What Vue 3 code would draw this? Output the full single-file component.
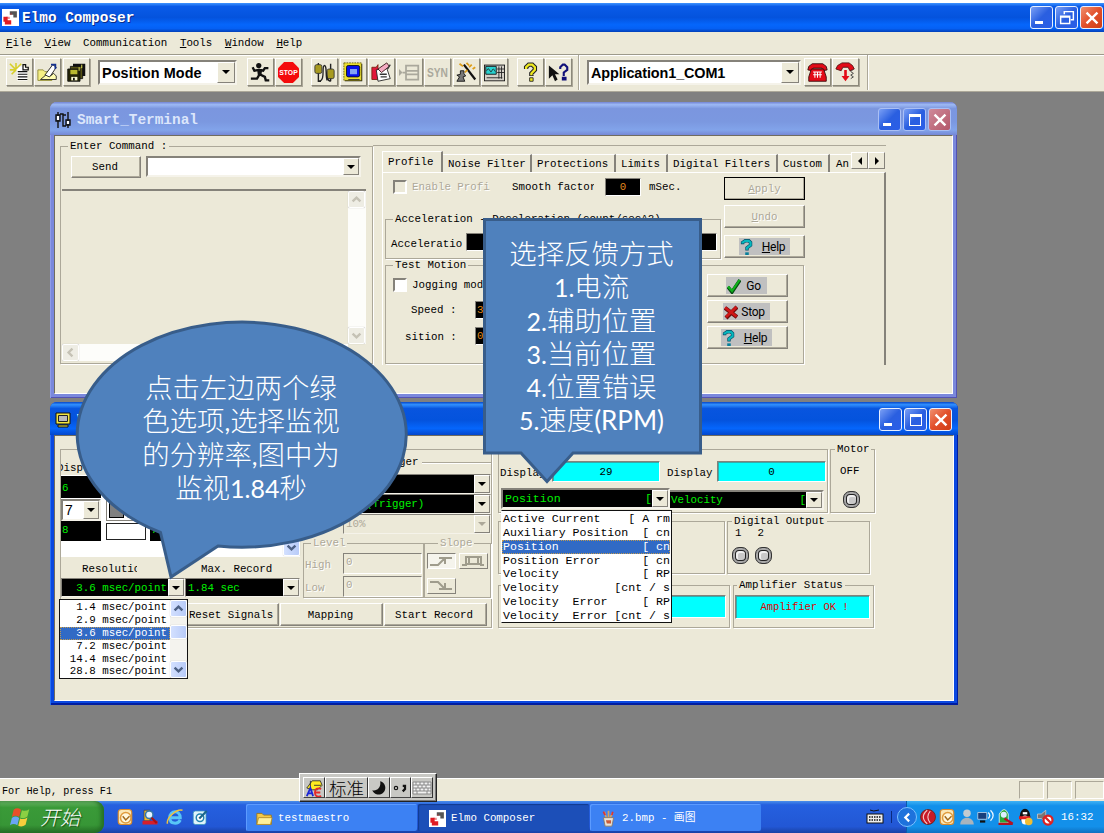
<script setup>
const menus = ['File', 'View', 'Communication', 'Tools', 'Window', 'Help']
const plainMenus = ['Communication']

const icons = {
  elmo: '<rect width="24" height="24" fill="#fff"/><path d="M11 3h10v9h-5V8h-5z" fill="#555"/><path d="M2 11h6v5h5v6H4v-4H2z" fill="#e01b24"/><path d="M6 11h5v3H8zM13 5l-2 3h3z" fill="#e01b24" opacity=".5"/>',
  newdoc: '<path d="M9 5h8l4 4v12H9z" fill="#fff"/><path d="M16 3h3v3h3v3h-6zM10 11h11M10 14h11M10 17h11M10 20h11" fill="none" stroke="#111" stroke-width="1.4"/><path d="M1 2l7 7M8 1v7M1 9h7M14 2L8 8M3 14l5-5" stroke="#d7cf2c" stroke-width="1.8"/>',
  open: '<path d="M1 9h6l2 2h8v10H1z" fill="#f5ef84" stroke="#8b8730"/><path d="M9 15L18 3l4 3-8 12z" fill="#fff" stroke="#111"/><path d="M4 20h18v-4l-3-3-5 4-4-2z" fill="#fffdb0" stroke="#222"/><path d="M16 3h5v5" fill="none" stroke="#15328f" stroke-width="2"/>',
  save: '<path d="M8 2h14v14H8z" fill="#111"/><path d="M5 5h14v14H5z" fill="#555214" stroke="#111"/><path d="M2 8h14v14H2z" fill="#242406" stroke="#111"/><path d="M5 9h8v5H5z" fill="#b9b92f"/><path d="M6 17h7v4H6z" fill="#f8f8d0"/><path d="M8 18h2v3H8z" fill="#111"/><path d="M18 3v4M15 6v4" stroke="#ffff66"/>',
  run: '<circle cx="10" cy="4" r="3" fill="#111"/><path d="M3 6l2 4 5-1 5 1 2-3h4M10 8l1 6 6 3 1 4h4M11 14l-3 5H1" fill="none" stroke="#111" stroke-width="2.7"/><path d="M8 8h6l-1 7H9z" fill="#111"/>',
  stop: '<path d="M7 0h10l7 7v10l-7 7H7l-7-7V7z" fill="#f40b0b"/><text x="12" y="15.3" text-anchor="middle" font-family="Liberation Sans" font-size="9" font-weight="700" fill="#fff" textLength="21" lengthAdjust="spacingAndGlyphs">STOP</text>',
  plugs: '<path d="M5 12v10h3M5 1v3M19 2v7M19 18v4" fill="none" stroke="#222" stroke-width="1.6"/><rect x="1" y="3" width="8" height="10" rx="2" fill="#a79a20" stroke="#333"/><rect x="15" y="8" width="8" height="11" rx="2" fill="#a79a20" stroke="#333"/><path d="M5 22c9 0 3-18 7-18s-1 17 7 18M12 4c3 0 1 14 3 17" fill="none" stroke="#222" stroke-width="1.5"/>',
  monitor: '<path d="M2 2h20v20H2z" fill="#111"/><path d="M1 1h20v20H1z" fill="#ebdf32" stroke="#665f10" stroke-dasharray="2 1"/><rect x="4" y="4" width="15" height="13" rx="2" fill="#0711ec" stroke="#111"/><rect x="8" y="8" width="8" height="6" fill="#83a3f4"/><path d="M6 20h13" stroke="#333"/>',
  notes: '<path d="M1 6h5l2-3v17H1z" fill="#e1173a" stroke="#721"/><path d="M6 9l12-2 4 12-14 3z" fill="#fff" stroke="#222"/><path d="M8 8L18 1l3 4-9 7z" fill="#f3abc2" stroke="#311"/><path d="M10 14h8M11 17h7M19 8l3-5" stroke="#333" stroke-width="1.5"/>',
  rows: '<path d="M0 8l4 4-4 4z" fill="#aaa89c"/><path d="M4 12h4M8 4h14v16H8zM8 10h14M8 14h14" fill="none" stroke="#aaa89c" stroke-width="2"/>',
  syn: '<text x="12" y="17" text-anchor="middle" font-family="Liberation Sans" font-size="14" font-weight="700" fill="#aaa89c" textLength="24" lengthAdjust="spacingAndGlyphs">SYN</text>',
  wand: '<path d="M9 3l13 17" stroke="#111" stroke-width="2.5"/><path d="M12 1l3 3M18 3l-3 3M8 5L4 2M19 8l3-2M13 9l-3 3" stroke="#dd9d18" stroke-width="2"/><path d="M5 10h4v3l2 3-3 1 2 5H1l3-5-3-2 4-1z" fill="#777" stroke="#111"/>',
  scope: '<rect x="0.500" y="3.500" width="23" height="18" fill="#d4d0c8" stroke="#111"/><path d="M2 5h12v9H2z" fill="#29d2d0" stroke="#111"/><path d="M3 10c3-7 4 5 6 0s3 1 4 1M17 5v14M20 5v14M15 8h8M15 12h8M3 18h18" fill="none" stroke="#222"/>',
  help: '<path d="M7 8V6l3-3h4l3 3v3l-4 4v3" fill="none" stroke="#222" stroke-width="5"/><path d="M7 8V6l3-3h4l3 3v3l-4 4v2" fill="none" stroke="#efea20" stroke-width="2.6"/><path d="M11 18h4v4h-4z" fill="#efea20" stroke="#222"/>',
  pointhelp: '<path d="M1 4v15l4-4 3 7 3-2-3-6h5z" fill="#111"/><path d="M14 8V6l3-3h2l3 3v3l-4 3v4M17 18h3v2h-3z" fill="none" stroke="#101078" stroke-width="2.4"/>',
  phone: '<path d="M1 9l1-4 4-3h12l4 3 1 4-5 1-1-3H7l-1 3z" fill="#e30b17" stroke="#35090a"/><path d="M5 8h14l3 9v5H2v-5z" fill="#e30b17" stroke="#35090a"/><path d="M9 11v7M12 11v7M15 11v7M7 11.500h10M7 14.500h10" stroke="#fff" stroke-width="1.200"/>',
  hang: '<path d="M1 8l2-4 5-3h8l4 3 2 4-5 2-2-4H9l-2 4z" fill="#e30b17" stroke="#511"/><path d="M20 9l-2 2 3 2-3 2 3 2-3 2" fill="none" stroke="#333"/><path d="M10.500 9h3v7h3l-4.500 6-4.500-6h3z" fill="#e30b17"/>',
}

const fileTools = ['newdoc', 'open', 'save']
const runTools = ['run', 'stop']
const viewTools = ['plugs', 'monitor', 'notes', 'rows', 'syn', 'wand', 'scope']
const helpTools = ['help', 'pointhelp']
const phoneTools = ['phone', 'hang']

const tabs = [
  { label: 'Noise Filter', w: 89 },
  { label: 'Protections', w: 84 },
  { label: 'Limits', w: 52 },
  { label: 'Digital Filters', w: 110 },
  { label: 'Custom', w: 52 },
]

const resolutions = ['1.4', '2.9', '3.6', '7.2', '14.4', '28.8']
const signals = [
  'Active Current    [ A rms ]',
  'Auxiliary Position  [ cnt ]',
  'Position            [ cnt ]',
  'Position Error      [ cnt ]',
  'Velocity            [ RPM ]',
  'Velocity        [cnt / sec]',
  'Velocity  Error     [ RPM ]',
  'Velocity  Error [cnt / sec]',
]

const quick = {
  mail: '<rect x="3" y="2" width="18" height="20" rx="4" fill="#fbe7b5" stroke="#d98a2b" stroke-width="1.5"/><circle cx="13" cy="13" r="7" fill="#fff7dd" stroke="#e09b3d" stroke-width="2"/><path d="M9 11l4 5 5-5" fill="none" stroke="#a36b1c" stroke-width="2"/>',
  find: '<path d="M4 3h8v14H4z" fill="#f0b92b" stroke="#444"/><path d="M2 17h20v5H2z" fill="#d61f2c"/><circle cx="11" cy="9" r="5" fill="#e6f4ff" stroke="#3478aa" stroke-width="2"/><path d="M14 13l7 7" stroke="#a11" stroke-width="3"/>',
  ie: '<path d="M5 13h14c0-11-14-10-14 0 0 9 11 9 14 3" fill="none" stroke="#58c5f7" stroke-width="4"/><path d="M2 21C0 13 14 1 22 3" fill="none" stroke="#f0c23d" stroke-width="2"/>',
  desk: '<rect x="3" y="4" width="17" height="18" rx="3" fill="#dff3fa" stroke="#3b98bd"/><circle cx="12" cy="13" r="5" fill="#fff" stroke="#2484b1" stroke-width="2"/><path d="M11 14L21 4" stroke="#1c678c" stroke-width="3"/>',
}
const tray = {
  red: '<circle cx="12" cy="12" r="10" fill="#c81927" stroke="#621"/><path d="M11 3c-7 6-7 12 0 18M15 4c-4 5-4 11 0 16" fill="none" stroke="#f3c9c9" stroke-width="1.5"/>',
  mail: quick.mail,
  user: '<circle cx="12" cy="7" r="5" fill="#c4cbd0"/><path d="M3 22c0-12 18-12 18 0z" fill="#aab4bd"/>',
  net: '<path d="M1 6h12v9H1z" fill="#173e7c" stroke="#cde"/><path d="M4 18h7" stroke="#111" stroke-width="3"/><path d="M15 6q4 4 0 8M18 3q7 7 0 14" fill="none" stroke="#e9f5ff" stroke-width="1.7"/>',
  find: '<path d="M3 8q7-12 12 0v12H3z" fill="#2aa93b" stroke="#fff"/><circle cx="9" cy="9" r="4" fill="#def"/><path d="M10 14l11 7M2 21h19" stroke="#b51123" stroke-width="3"/>',
  qq: '<ellipse cx="12" cy="11" rx="7" ry="10" fill="#111"/><ellipse cx="12" cy="16" rx="5" ry="6" fill="#fff"/><path d="M4 11h15v4H4z" fill="#e01d1d"/><circle cx="17" cy="18" r="5" fill="#f0bd33"/><path d="M9 7h6" stroke="#fff" stroke-width="3"/>',
  sound: '<path d="M2 8h5l6-5v16l-6-5H2z" fill="#777" stroke="#ccc"/><circle cx="16" cy="16" r="6" fill="#fff" stroke="#d22" stroke-width="3"/><path d="M12 12l8 8" stroke="#d22" stroke-width="3"/>',
}
</script>

<template>
  <div class="screen">
    <header class="titlebar">
      <svg class="app-ico" viewBox="0 0 24 24" v-html="icons.elmo"></svg>
      <span class="title">Elmo Composer</span>
      <span class="wbtn"><i class="min"></i></span>
      <span class="wbtn"><svg viewBox="0 0 22 22"><path d="M8 7V4h10v9h-3" fill="none" stroke="#fff" stroke-width="1.6" /><path d="M4 9h10v8H4zM4 10h10" fill="none" stroke="#fff" stroke-width="1.6" /></svg></span>
      <span class="wbtn close"><svg viewBox="0 0 22 22"><path d="M5 5l12 12M17 5L5 17" stroke="#fff" stroke-width="2.6" /></svg></span>
    </header>

    <nav class="menu">
      <span v-for="m in menus" :key="m"><template v-if="plainMenus.includes(m)">{{ m }}</template><template v-else><u>{{ m[0] }}</u>{{ m.slice(1) }}</template></span>
    </nav>

    <div class="toolbar">
      <div class="tools first"><span v-for="i in fileTools" :key="i" class="tool"><svg viewBox="0 0 24 24" v-html="icons[i]"></svg></span></div>
      <div class="combo big mode"><span class="val">Position Mode</span><i class="drop"></i></div>
      <div class="tools"><span v-for="i in runTools" :key="i" class="tool"><svg viewBox="0 0 24 24" v-html="icons[i]"></svg></span></div>
      <div class="tools view"><span v-for="i in viewTools" :key="i" class="tool"><svg viewBox="0 0 24 24" v-html="icons[i]"></svg></span></div>
      <div class="tools hlp"><span v-for="i in helpTools" :key="i" class="tool"><svg viewBox="0 0 24 24" v-html="icons[i]"></svg></span></div>
      <i class="vsep"></i>
      <div class="combo big appsel"><span class="val">Application1_COM1</span><i class="drop"></i></div>
      <div class="tools ph"><span v-for="i in phoneTools" :key="i" class="tool"><svg viewBox="0 0 24 24" v-html="icons[i]"></svg></span></div>
      <i class="vsep"></i>
    </div>

    <main class="workspace"></main>

    <section class="win inactive">
      <div class="wtitle">
        <svg class="wico" viewBox="0 0 16 16"><path d="M3 0v16M1 3h4v6H1zM13 0v16M11 8h4v5h-4zM5 2h3v12h3M8 3h3" fill="none" stroke="#111" stroke-width="1.4" /><path d="M2 4h2v4H2zM12 9h2v3h-2z" fill="#fff" /></svg>
        <span class="title">Smart_Terminal</span>
        <span class="wbtn"><i class="min"></i></span>
        <span class="wbtn"><i class="max"></i></span>
        <span class="wbtn close"><svg viewBox="0 0 22 22"><path d="M5 5l12 12M17 5L5 17" stroke="#fff" stroke-width="2.6" /></svg></span>
      </div>
      <div class="client">
        <fieldset class="enter">
          <legend>Enter Command :</legend>
          <div class="cmdrow">
            <span class="btn send">Send</span>
            <div class="combo cmd"><span class="val"></span><i class="drop"></i></div>
          </div>
          <div class="log">
            <div class="logmain"><span class="sb off"><svg viewBox="0 0 10 10"><path d="M6.500 2L3.500 5l3 3" /></svg></span></div>
            <div class="vs">
              <span class="sb off"><svg viewBox="0 0 10 10"><path d="M2 6.500l3-3 3 3" /></svg></span>
              <span class="sb off"><svg viewBox="0 0 10 10"><path d="M2 3.500l3 3 3-3" /></svg></span>
            </div>
          </div>
        </fieldset>

        <div class="tabzone">
          <div class="tabs">
            <span class="tab on">Profile</span>
            <span v-for="t in tabs" :key="t.label" class="tab" :style="{ width: t.w + 'px' }">{{ t.label }}</span>
            <span class="tab last">An</span>
            <span class="spin"><i class="l"></i></span><span class="spin"><i class="r"></i></span>
          </div>
          <div class="panel">
            <div class="ptop">
              <div class="pleft">
                <div class="prow">
                  <i class="chk dis"></i><span class="dim enable">Enable Profi</span>
                  <span class="smooth">Smooth factor</span><span class="num sm">0</span><span class="ms">mSec.</span>
                </div>
                <fieldset class="accel">
                  <legend>Acceleration - Deceleration (count/sec^2)</legend>
                  <div class="arow"><span>Acceleratio</span><span class="num af"></span></div>
                </fieldset>
              </div>
              <div class="pbtns">
                <span class="btn dim def"><u>A</u>pply</span>
                <span class="btn dim"><u>U</u>ndo</span>
                <span class="btn h3"><em class="pic"><svg viewBox="0 0 14 18"><path d="M2 6V4l3-2h4l2 2v3l-4 3v3" fill="none" stroke="#074a66" stroke-width="3.800" /><path d="M2 5V4l3-2h4l2 2v3l-4 3v2" fill="none" stroke="#06b7bd" stroke-width="2.500" /><path d="M5 15h4v3H5z" fill="#087f9b" /></svg><b class="wide"><u>H</u>elp</b></em></span>
              </div>
            </div>
            <fieldset class="test">
              <legend>Test Motion</legend>
              <div class="tmain">
                <div class="tleft">
                  <div class="jog"><i class="chk"></i><span>Jogging mode</span></div>
                  <div class="trow"><span class="s1">Speed :</span><span class="num">3000</span></div>
                  <div class="trow t2"><span class="s2">sition :</span><span class="num">0</span></div>
                </div>
                <div class="tbtns">
                  <span class="btn"><em class="pic"><svg viewBox="0 0 14 14"><path d="M1 8l4 5L13 1" fill="none" stroke="#064c12" stroke-width="3.500" /><path d="M1 7.500l4 4.500L12.500 1" fill="none" stroke="#10b21c" stroke-width="2.200" /></svg><b class="go">Go</b></em></span>
                  <span class="btn"><em class="pic"><svg viewBox="0 0 14 14"><path d="M1 3l12 9M13 2L2 13" stroke="#6e0d0d" stroke-width="4.200" /><path d="M1 2.500l11.500 9M12.500 2L2 12" stroke="#cf1717" stroke-width="2.600" /></svg><b>Stop</b></em></span>
                  <span class="btn"><em class="pic"><svg viewBox="0 0 14 18"><path d="M2 6V4l3-2h4l2 2v3l-4 3v3" fill="none" stroke="#074a66" stroke-width="3.800" /><path d="M2 5V4l3-2h4l2 2v3l-4 3v2" fill="none" stroke="#06b7bd" stroke-width="2.500" /><path d="M5 15h4v3H5z" fill="#087f9b" /></svg><b class="wide"><u>H</u>elp</b></em></span>
                </div>
              </div>
            </fieldset>
          </div>
        </div>
      </div>
    </section>

    <section class="win active">
      <div class="wtitle">
        <svg class="wico" viewBox="0 0 16 16"><path d="M1 1h14v11H1zM3 13h10v2H3z" fill="#f2e640" stroke="#111" /><path d="M3.500 3.500h9v6h-9z" fill="#bbb" stroke="#222" /></svg>
        <span class="title">View</span>
        <span class="wbtn"><i class="min"></i></span>
        <span class="wbtn"><i class="max"></i></span>
        <span class="wbtn close"><svg viewBox="0 0 22 22"><path d="M5 5l12 12M17 5L5 17" stroke="#fff" stroke-width="2.6" /></svg></span>
      </div>
      <div class="client">
        <div class="rec">
          <div class="rectop">
            <div class="sig">
              <div class="sighead"><span>Display</span></div>
              <div class="sigrows">
                <div class="scol">
                  <span class="lcd r6">6</span>
                  <div class="combo r7"><span class="val">7</span><i class="drop"></i></div>
                  <span class="lcd r8">8</span>
                </div>
                <div class="scol c2"><div class="sw"><i class="gray"></i><i class="drop"></i></div><i class="white"></i></div>
                <span class="lcd c3">A</span>
                <span class="sb on"><svg viewBox="0 0 10 10"><path d="M2 3.500l3 3 3-3" /></svg></span>
              </div>
              <div class="reslab"><span class="clip">Resolution</span><span>Max. Record</span></div>
              <div class="rescombos">
                <div class="combo g cr"><span class="val">3.6 msec/point</span><i class="drop"></i></div>
                <div class="combo g cm"><span class="val">1.84 sec</span><i class="drop"></i></div>
              </div>
            </div>
            <div class="trig">
              <div class="trighead"><span>Trigger</span></div>
              <div class="combo g"><span class="val"></span><i class="drop"></i></div>
              <div class="combo g"><span class="val tv">(Trigger)</span><i class="drop"></i></div>
              <div class="combo off"><span class="val">10%</span><i class="drop"></i></div>
              <div class="ls">
                <fieldset class="level dim">
                  <legend>Level</legend>
                  <div class="lrow"><span>High</span><em>0</em></div>
                  <div class="lrow"><span>Low</span><em>0</em></div>
                </fieldset>
                <fieldset class="slope dim">
                  <legend>Slope</legend>
                  <div class="sbtns">
                    <span class="sbn pressed"><svg viewBox="0 0 26 14"><path d="M2 11h8l7-7h7M11 4h6v6" /></svg></span>
                    <span class="sbn"><svg viewBox="0 0 26 14"><path d="M2 11h4V3h15v8h3M7 10h13M18 3v7M9 3v7" /></svg></span>
                    <span class="sbn"><svg viewBox="0 0 26 14"><path d="M2 3h8l7 7h7M11 10h6V4" /></svg></span>
                  </div>
                </fieldset>
              </div>
            </div>
          </div>
          <div class="recbtns">
            <span class="btn b0"></span><span class="btn b1">Reset Signals</span><span class="btn b2">Mapping</span><span class="btn b3">Start Record</span>
          </div>
        </div>

        <div class="stat">
          <div class="srow">
            <div class="box disp">
              <div class="drow"><span class="dl">Display</span><span class="cyan c107">29</span><span class="dl d2">Display</span><span class="cyan c108">0</span></div>
              <div class="drow2">
                <div class="combo g k1"><span class="val">Position<s>[</s></span><i class="drop"></i></div>
                <div class="combo g k2"><span class="val">Velocity<s>[</s></span><i class="drop"></i></div>
              </div>
            </div>
            <fieldset class="motor"><legend>Motor</legend><p>OFF</p><i class="led"></i></fieldset>
          </div>
          <div class="srow two">
            <div class="box din"></div>
            <fieldset class="dout"><legend>Digital Output</legend><div class="nums"><span>1</span><span>2</span></div><div class="leds"><i class="led"></i><i class="led"></i></div></fieldset>
          </div>
          <div class="srow three">
            <div class="box st"><span class="cyan"></span></div>
            <fieldset class="amp"><legend>Amplifier Status</legend><span class="cyan">Amplifier OK !</span></fieldset>
          </div>
        </div>
      </div>
    </section>

    <div class="menu-res">
      <ul><li v-for="(r, i) in resolutions" :key="r" :class="{ sel: i === 2 }">{{ r }} msec/point</li></ul>
      <div class="rbar">
        <span class="sb on"><svg viewBox="0 0 10 10"><path d="M2 6.500l3-3 3 3" /></svg></span>
        <span class="sb on thumb"></span>
        <span class="sb on end"><svg viewBox="0 0 10 10"><path d="M2 3.500l3 3 3-3" /></svg></span>
      </div>
    </div>
    <ul class="menu-sig"><li v-for="(s, i) in signals" :key="i" :class="{ sel: i === 2 }">{{ s }}</li></ul>

    <div class="callout round">
      <svg viewBox="0 0 336 260"><path d="M88.500 212.500A164.500 112.500 0 1 1 146 226L99 257Z" /></svg>
      <p>点击左边两个绿<br />色选项<b>,</b>选择监视<br />的分辨率<b>,</b>图中为<br />监视<b>1.84</b>秒</p>
    </div>
    <div class="callout rect">
      <svg viewBox="0 0 220 268"><path d="M1.500 1.500H217.500V235H90L64 263.500L38 235H1.500Z" /></svg>
      <p>选择反馈方式<br /><b>1.</b>电流<br /><b>2.</b>辅助位置<br /><b>3.</b>当前位置<br /><b>4.</b>位置错误<br /><b>5.</b>速度<b class="rpm">(RPM)</b></p>
    </div>

    <footer class="status"><span>For Help, press F1</span><i></i><i></i><i></i></footer>

    <div class="taskbar">
      <div class="start">
        <svg viewBox="0 0 24 24"><path d="M4 4q4-3 8 0l-2 8q-4-3-8 0z" fill="#e8502a" /><path d="M13 4.500q4 2 8-1l-2 8q-4 3-8 1z" fill="#8bd043" /><path d="M2 13q4-3 8 0l-2 8q-4-3-8 0z" fill="#6aa5f5" /><path d="M11 13.500q4 2 8-1l-2 8q-4 3-8 1z" fill="#f7ce3c" /></svg>
        <span>开始</span>
      </div>
      <div class="quick"><svg v-for="(q, k) in quick" :key="k" viewBox="0 0 24 24" v-html="q"></svg></div>
      <div class="task"><svg viewBox="0 0 20 20"><path d="M1 4h6l2 2h9v11H1z" fill="#f4c94a" stroke="#9b7417" /><path d="M3 9h16l-2 8H1z" fill="#fff09a" stroke="#b18a28" /></svg>testmaestro</div>
      <div class="task cur"><svg viewBox="0 0 24 24" v-html="icons.elmo"></svg>Elmo Composer</div>
      <div class="task"><svg viewBox="0 0 20 20"><path d="M5 2l3 9M10 1v9M15 3l-4 8" stroke="#d9a35c" stroke-width="2" /><path d="M4 2l2 4M15 2l-1 4" stroke="#d33" stroke-width="2" /><path d="M4 9h12l-2 10H6z" fill="#e9e2d5" stroke="#876" /><path d="M7 12h6v4H8z" fill="#ca5b3b" /></svg>2.bmp - 画图</div>
      <svg class="kb" viewBox="0 0 18 16"><path d="M4 1q3 2 9 0" fill="none" stroke="#111" /><rect x="1" y="5" width="16" height="9" fill="#eee" stroke="#111" /><path d="M3 8h12M3 11h12" stroke="#111" stroke-width="1.500" stroke-dasharray="1.500 1" /></svg>
      <i class="bar"></i>
      <div class="tray">
        <span class="chev"><svg viewBox="0 0 10 10"><path d="M6.500 1.500L3 5l3.500 3.500" fill="none" stroke="#fff" stroke-width="2" /></svg></span>
        <svg v-for="(q, k) in tray" :key="k" viewBox="0 0 24 24" v-html="q"></svg>
        <time>16:32</time>
      </div>
    </div>

    <div class="ime">
      <span class="c1"><svg viewBox="0 0 20 20"><path d="M2 10l6-8h9l2 5-5 5H8zM6 2v8M10 7h8" fill="#ffea20" stroke="#333" /><path d="M2 19l4-9 3 9M3 16h5" fill="none" stroke="#1a25d6" stroke-width="2" /><path d="M18 11q-7-2-7 4t7 4M11 15h6" fill="none" stroke="#e32a2a" stroke-width="2" /></svg></span>
      <span class="c2">标准</span>
      <span class="c3"><svg viewBox="0 0 16 16"><path d="M9 2a6 6 0 1 1-7 8c5 1 8-3 7-8z" fill="#111" /></svg></span>
      <span class="c4"><svg viewBox="0 0 16 16"><circle cx="4" cy="8" r="1.500" fill="none" stroke="#111" /><path d="M10 6h2v3l-2 2" fill="none" stroke="#111" stroke-width="2" /></svg></span>
      <span class="c5"><svg viewBox="0 0 20 16"><path d="M1 2h18v12H1z" fill="#f2f2f2" stroke="#888" /><path d="M1 5h18M1 8h18M1 11h18M4 2v3M8 2v3M12 2v3M16 2v3M6 5v3M10 5v3M14 5v3M4 8v3M8 8v3M12 8v3M16 8v3M5 11v3M15 11v3" stroke="#888" /></svg></span>
    </div>
  </div>
</template>

<style>
body { overflow: hidden; background: #808080; }
</style>

<style scoped>
* { box-sizing: border-box; }
.screen { position: relative; width: 1104px; height: 833px; overflow: hidden; display: flex; flex-direction: column; background: #808080; color: #000; font: 10.8px/12px "Liberation Mono", "Noto Sans CJK SC", monospace; white-space: pre; }
svg { display: block; }
i, em { font-style: normal; }
p, ul { margin: 0; padding: 0; list-style: none; }

/* main window title bar */
.titlebar { flex: none; height: 32px; border-top: 3px solid #fff; padding: 0 1px 0 2px; display: flex; align-items: center; gap: 2px; background: linear-gradient(#3f94ff 0, #0a5be8 12%, #0453dd 50%, #0566fc 75%, #0560f4 88%, #0340b8 100%); }
.title { flex: 1; color: #fff; font-weight: 700; font-size: 14.4px; line-height: 18px; font-family: "Liberation Mono", monospace; text-shadow: 1px 1px 0 #0b2f8a; }
.app-ico { width: 17px; height: 17px; margin-right: 1px; }
.wbtn { width: 23px; height: 23px; border: 1px solid #e8f0ff; border-radius: 3px; background: linear-gradient(135deg, #7ba0f5, #2a5fe0 50%, #2a5ee8); display: flex; flex: none; align-items: center; justify-content: center; }
.wbtn svg { width: 20px; height: 20px; }
.wbtn.close { background: linear-gradient(135deg, #f0906f, #e2502b 50%, #cf3d16); }
.min { width: 8px; height: 3px; background: #fff; margin: 10px 5px 0 0; }
.max { width: 12px; height: 12px; border: 1px solid #fff; border-top-width: 3px; }

.menu { flex: none; height: 22px; padding: 5px 6px; display: flex; gap: 12.6px; background: #ece9d8; }
.toolbar { flex: none; height: 38px; display: flex; align-items: center; background: #ece9d8; border-top: 1px solid #9d9a8b; box-shadow: inset 0 1px 0 #fff, inset 0 -1px 0 #aca899; padding: 0 0 3px 6px; }
.tools { display: flex; gap: 1.250px; margin-left: 10px; }
.tools.first { margin-left: 0; }
.tools.view { margin-left: 9px; }
.tools.hlp { margin-left: 9px; margin-right: 6px; }
.tools.ph { margin-left: 3px; margin-right: 8px; }
.tool { width: 27px; height: 28px; padding: 2px; border: 1px solid; border-color: #fff #8b887a #8b887a #fff; box-shadow: 1px 1px 0 #aca899; display: flex; align-items: center; justify-content: center; }
.tool svg { width: 21px; height: 21px; }
.vsep { width: 2px; height: 35px; border-left: 1px solid #aca899; border-right: 1px solid #fff; }

/* shared controls */
.combo { display: flex; background: #fff; border: 2px solid; border-color: #85827a #f5f3ea #f5f3ea #85827a; }
.val { flex: 1; overflow: hidden; align-self: center; padding-left: 2px; }
.drop { width: 16px; flex: none; background: #ece9d8; border: 1px solid; border-color: #fff #85827a #85827a #fff; display: flex; align-items: center; justify-content: center; }
.drop::after { content: ""; border: 4px solid transparent; border-bottom: 0; border-top-color: #000; }
.combo.g { background: #000; color: #00f000; }
.combo.off { background: #ece9d8; color: #aca899; }
.combo.off .drop::after { border-top-color: #aca899; }
.big { font: 700 14.400px/18px "Liberation Sans", sans-serif; height: 25px; }
.big .val { padding-top: 2px; }
.big .drop { width: 18px; }
.mode { width: 139px; margin-left: 8.500px; letter-spacing: .1px; }
.appsel { width: 214px; margin-left: 7px; letter-spacing: -.1px; }
.btn { display: flex; align-items: center; justify-content: center; background: #ece9d8; border: 1px solid; border-color: #fff #85827a #85827a #fff; box-shadow: inset -1px -1px 0 #aca899; width: 81px; height: 23px; flex: none; }
.dim { color: #aca899; text-shadow: 1px 1px 0 #fff; }
fieldset { margin: 0; padding: 0; border: 1px solid #aca899; box-shadow: 1px 1px 0 #fff; min-width: 0; flex: none; }
legend { margin-left: 7px; padding: 0 2px; height: 12px; line-height: 12px; }
.box { border: 1px solid #aca899; box-shadow: 1px 1px 0 #fff; flex: none; }
.sb { width: 17px; height: 17px; flex: none; border: 1px solid #fff; border-radius: 2px; display: flex; align-items: center; justify-content: center; background: #eeede4; box-shadow: 0 0 1px #aaa; }
.sb svg { width: 13px; height: 13px; fill: none; stroke: #c5c2b5; stroke-width: 1.8; }
.sb.on { background: linear-gradient(90deg, #d3e0ff, #b8cbf8); }
.sb.on svg { stroke: #4d6185; }
.num { background: #000; color: #e08a1e; border: 1px solid; border-color: #85827a #fff #fff #85827a; display: block; height: 18px; line-height: 16px; }

/* child windows */
.win { position: absolute; display: flex; flex-direction: column; border-radius: 7px 7px 0 0; padding: 0 4px 4px; }
.inactive { left: 50px; top: 102px; width: 907px; height: 296px; background: #7a88dc; box-shadow: inset 1px 0 0 #8f9ce8, inset -1px -1px 0 #5252b4; }
.active { left: 50px; top: 402px; width: 908px; height: 303px; background: #0a48e0; box-shadow: inset 1px 0 0 #2a70f0, inset -1px -2px 0 #001da0; }
.wtitle { height: 33px; margin: 0 -4px; padding: 2px 6px 0 5px; border-radius: 7px 7px 0 0; display: flex; align-items: center; gap: 2px; flex: none; }
.inactive .wtitle { background: linear-gradient(#7384d4, #9db9f4 8%, #7b96df 20%, #7b98e0 60%, #82a4ea 85%, #7588d6); }
.active .wtitle { background: linear-gradient(#0847c8, #3190ff 8%, #0855df 20%, #0453dd 55%, #0566fc 80%, #0347cc); }
.inactive .title { color: #dce6fb; text-shadow: none; }
.inactive .wbtn { border-color: #a9bff5; }
.inactive .wbtn.close { background: linear-gradient(135deg, #cf8a9a, #b3576a); }
.wico { width: 16px; height: 16px; margin-right: 4px; }
.client { flex: 1; background: #ece9d8; border-top: 1px solid #6f6c5f; border-left: 1px solid #6f6c5f; border-right: 1px solid #fff; border-bottom: 1px solid #fff; display: flex; align-items: flex-start; }

/* terminal */
.enter { margin: 4px 0 0 5px; width: 313px; height: 224px; }
.cmdrow { display: flex; gap: 5px; margin: 4px 0 0 10px; }
.btn.send { width: 70px; height: 22px; padding-right: 2px; }
.cmd { width: 215px; height: 21px; }
.log { margin: 11px 0 0 1px; width: 304px; height: 172px; border-top: 2px solid #85827a; display: flex; }
.logmain { flex: 1; display: flex; align-items: flex-end; background: linear-gradient(#ece9d8 153px, #fdfdfa 153px); }
.vs { width: 18px; height: 153px; background: #fdfdfa; display: flex; flex-direction: column; justify-content: space-between; }
.tabzone { margin-top: 9px; width: 513px; border-top: 1px solid #aca899; padding: 5px 0 0 9px; }
.tabs { display: flex; align-items: flex-end; height: 21px; width: 504px; }
.tab { flex: none; height: 18px; border-top: 1px solid #fff; border-right: 2px solid #85827a; padding: 3px 0 0 5px; overflow: hidden; }
.tab.on { width: 61px; height: 21px; border-left: 1px solid #fff; padding-top: 4px; }
.tab.last { width: 21px; border-right: 0; padding-left: 6px; }
.spin { width: 17px; height: 17px; align-self: flex-start; margin-top: 1px; border: 1px solid; border-color: #fff #85827a #85827a #fff; display: flex; align-items: center; justify-content: center; }
.l, .r { border: 4px solid transparent; }
.l { border-left: 0; border-right-color: #000; }
.r { border-right: 0; border-left-color: #000; }
.panel { width: 504px; height: 193px; border-top: 1px solid #fff; border-left: 1px solid #fff; border-right: 2px solid #85827a; }
.ptop { display: flex; height: 86px; }
.pleft { width: 338px; }
.prow { display: flex; margin-top: 5px; height: 18px; line-height: 19px; }
.chk { width: 14px; height: 14px; margin: 2px 5px 0 10px; background: #fff; border: 2px solid; border-color: #85827a #fff #fff #85827a; flex: none; }
.chk.dis { background: #ece9d8; }
.enable { width: 78px; margin-right: 22px; }
.smooth { width: 82px; overflow: hidden; }
.sm { width: 36px; margin: 0 8px 0 11px; text-align: center; }
.accel { margin: 17px 0 0 2px; width: 336px; height: 46px; }
.accel legend { height: 12px; }
.arow { display: flex; margin: 8px 0 0 5px; line-height: 23px; height: 18px; }
.arow span:first-child { width: 75px; }
.af { width: 251px; }
.pbtns { margin: 4px 0 0 3px; display: flex; flex-direction: column; gap: 5px; }
.btn.def { border-color: #000; }
.btn.h3 { margin-top: 2px; }
.pic { background: #c0c0c0; display: flex; align-items: center; height: 17px; padding: 0 5px 0 1px; font-family: Roboto, "Liberation Sans", sans-serif; }
.pic svg { width: 14px; height: 16px; margin-right: 3px; }
.pic b { font-weight: 400; font-size: 12px; letter-spacing: -.3px; }
.pic b.wide { margin-left: 5px; }
.pic b.go { margin: 0 1px 0 2px; }
.test { margin-left: 2px; width: 419px; height: 105px; }
.tmain { display: flex; }
.tleft { width: 321px; }
.jog { display: flex; margin: 7px 0 0 7px; line-height: 15px; height: 14px; }
.jog .chk { margin: 0 5px 0 0; }
.trow { display: flex; margin-top: 9px; height: 18px; line-height: 18px; }
.trow.t2 { margin-top: 8px; line-height: 20px; }
.trow .num { width: 60px; padding-left: 1px; }
.s1 { width: 89px; padding-left: 25px; }
.s2 { width: 89px; padding-left: 19px; }
.tbtns { margin-top: 3px; display: flex; flex-direction: column; gap: 3px; }
.tbtns .btn { padding-right: 2px; }

/* recorder */
.rec { margin: 13px 0 0 5px; width: 432px; height: 179px; border: 1px solid #aca899; box-shadow: 1px 1px 0 #fff; flex: none; }
.rectop { display: flex; height: 149px; }
.sig { width: 242px; flex: none; }
.sighead { height: 25px; padding-top: 12px; overflow: hidden; }
.sighead span { margin-left: -4px; }
.sigrows { height: 82px; width: 239px; background: #fff; display: flex; }
.scol { width: 40px; display: flex; flex-direction: column; }
.lcd { background: #000; color: #00f000; display: block; padding-left: 1px; }
.r6 { height: 22px; margin-top: 1px; line-height: 24px; }
.r7 { height: 22px; margin-top: 1px; font: 14px/18px "Liberation Sans", sans-serif; }
.r8 { height: 20px; line-height: 18px; }
.c2 { margin-left: 5px; padding-top: 25px; }
.sw { height: 21px; display: flex; border: 1px solid #85827a; padding: 2px; }
.gray { width: 15px; border: 1px solid #000; background: #808080; margin-right: 3px; }
.white { height: 17px; margin-top: 2px; border: 1px solid #222; background: #fff; }
.c3 { width: 60px; height: 20px; margin: 46px 0 0 4px; line-height: 19px; padding-left: 3px; }
.sigrows .sb { margin: 64px 0 0 auto; }
.reslab { height: 21px; display: flex; padding: 6px 0 0 21px; }
.clip { width: 55px; overflow: hidden; margin-right: 64px; }
.rescombos { display: flex; height: 19px; }
.rescombos .combo { border-width: 1px; }
.cr { width: 124px; }
.cr .val { text-align: right; padding: 0 1px 0 0; }
.cm { width: 115px; }
.trig { width: 188px; }
.trighead { margin-top: 6px; height: 18px; display: flex; gap: 3px; padding-left: 70px; }
.trighead span { width: 46px; }
.trighead::after { content: ""; flex: 1; height: 1px; margin-top: 6px; background: #aca899; box-shadow: 0 1px 0 #fff; }
.trig > .combo { height: 20px; border-width: 1px; }
.tv { padding-left: 62px; }
.trig > .combo.off { margin-left: 40px; }
.ls { display: flex; margin-top: 3px; }
.level { width: 121px; height: 61px; }
.lrow { display: flex; margin: 4px 0 0 1px; height: 21px; line-height: 24px; }
.lrow + .lrow { margin-top: 2px; }
.lrow span { width: 38px; }
.lrow em { width: 79px; line-height: 17px; padding-left: 2px; border: 1px solid; border-color: #85827a #fff #fff #85827a; }
.slope { width: 67px; height: 61px; }
.slope legend { margin-left: 13px; }
.sbtns { display: flex; flex-wrap: wrap; gap: 9px 3px; margin: 4px 0 0 2px; }
.sbn { width: 29px; height: 16px; border: 1px solid; border-color: #fff #85827a #85827a #fff; }
.sbn.pressed { border-color: #85827a #fff #fff #85827a; background: #f5f4ec; }
.sbn svg { width: 26px; height: 14px; fill: none; stroke: #9f9c8c; stroke-width: 2; }
.recbtns { display: flex; gap: 1px; margin-top: 4px; }
.b0 { width: 124px; }
.b1 { width: 93px; padding-right: 3px; }
.b2 { width: 103px; padding-right: 2px; }
.b3 { width: 103px; padding-right: 3px; }

/* status side */
.stat { margin: 13px 0 0 6px; }
.srow { display: flex; align-items: flex-start; height: 64px; }
.srow.two { margin-top: 8px; height: 53px; }
.srow.three { margin-top: 11px; height: 43px; }
.srow fieldset { margin-top: -6px; }
.disp { width: 330px; height: 64px; }
.drow { display: flex; margin-top: 11px; height: 21px; line-height: 24px; }
.dl { width: 53px; padding-left: 1px; }
.d2 { width: 57px; padding-left: 7px; }
.cyan { background: #0ff; border: 1px solid; border-color: #85827a #fff #fff #85827a; text-align: center; line-height: 20px; display: block; box-shadow: inset 1px 1px 0 #3aa; }
.c107 { width: 108px; }
.c108 { width: 109px; }
.drow2 { display: flex; margin: 6px 0 0 2px; }
.drow2 s { text-decoration: none; float: right; }
.k1 { width: 169px; height: 21px; font-size: 11.600px; }
.k2 { width: 154px; height: 20px; margin-top: 2px; border-left: 0; }
.k2 .val { padding-left: 1px; }
.motor { width: 45px; height: 70px; margin-left: 2px; }
.motor legend { margin-left: 4px; }
.motor p { margin: 10px 0 0 9px; }
.led { display: block; width: 17px; height: 17px; border-radius: 7px; border: 1px solid #333; background: #c9c9c9; box-shadow: inset 0 0 0 2px #a8a8a8, inset 0 0 0 3px #222, inset 1px 1px 0 4px #f0f0f0; }
.motor .led { margin: 14px 0 0 12px; }
.din { width: 227px; height: 53px; }
.dout { width: 143px; height: 59px; margin-left: 2px; }
.dout legend { margin-left: 4px; }
.nums { display: flex; gap: 16px; margin: 0 0 0 7px; }
.leds { display: flex; gap: 6px; margin: 8px 0 0 4px; }
.st { width: 232px; height: 43px; padding: 9px 3px 0; }
.st .cyan { height: 23px; }
.amp { width: 141px; height: 49px; margin-left: 3px; }
.amp legend { margin-left: 3px; }
.amp .cyan { width: 135px; height: 24px; margin: 4px 0 0 1px; color: #e00000; line-height: 22px; font-size: 10.500px; padding-left: 4px; }

/* open lists */
.menu-res { position: absolute; left: 59px; top: 599px; width: 129px; height: 80px; border: 1px solid #111; background: #fff; display: flex; }
.menu-res ul { flex: 1; padding-top: 1px; }
.menu-res li { height: 12.9px; line-height: 13px; text-align: right; padding-right: 3px; }
.sel { background: #316ac5; color: #fff; outline: 1px dotted #c09a50; outline-offset: -1px; }
.rbar { width: 17px; display: flex; flex-direction: column; background: #f4f3ee; }
.rbar .thumb { margin-top: 8px; height: 14px; }
.rbar .end { margin-top: auto; }
.menu-sig { position: absolute; left: 501px; top: 510px; width: 171px; height: 113px; padding: 1px 1px 0 0; border: 1px solid #111; border-left-color: #fff; background: #fff; overflow: hidden; font-size: 11.600px; }
.menu-sig li { height: 13.850px; line-height: 14px; overflow: hidden; padding-left: 1px; }

/* callouts */
.callout { position: absolute; color: #fff; font: 300 27.400px/33.300px "Noto Sans CJK SC", sans-serif; text-align: center; }
.callout svg { width: 100%; height: 100%; fill: #4f81bd; stroke: #385d8a; stroke-width: 3; }
.callout p { position: absolute; left: 0; right: 0; }
.callout b { font: 400 25px/20px Lato, sans-serif; }
.callout .rpm { font-size: 26px; }
.round { left: 72px; top: 320px; width: 336px; height: 260px; }
.round p { top: 50px; left: 2px; }
.rect { left: 483px; top: 218px; width: 220px; height: 268px; }
.rect p { top: 18px; right: 3px; }

/* bottom bars */
.workspace { flex: 1; }
.status { flex: none; height: 23px; background: #ece9d8; border-top: 1px solid #fff; display: flex; align-items: center; gap: 3px; padding-left: 2px; font-size: 10.200px; }
.status span { flex: 1; padding-top: 4px; }
.status i { width: 25px; height: 18px; border: 1px solid; border-color: #aca899 #fff #fff #aca899; }
.status i:last-child { width: 29px; }
.taskbar { flex: none; height: 32px; display: flex; align-items: center; background: linear-gradient(#4a8eea 0, #2560df 12%, #2257d5 80%, #1941a5); color: #fff; }
.start { width: 104px; height: 32px; border-radius: 0 9px 9px 0; background: linear-gradient(#6fb76b, #3a9a38 20%, #379636 75%, #256e25); display: flex; align-items: center; padding-left: 10px; gap: 8px; box-shadow: inset -3px 0 4px #256e25; }
.start svg { width: 22px; height: 22px; }
.start span { font: italic 300 20px/24px "Noto Sans CJK SC", sans-serif; text-shadow: 1px 1px 1px #174f17; }
.quick { display: flex; gap: 7px; padding-left: 12px; width: 142px; }
.quick svg { width: 18px; height: 18px; }
.task { width: 171px; height: 27px; margin-right: 1px; display: flex; align-items: center; padding: 2px 0 0 10px; gap: 5px; background: #3c81f3; border-radius: 2px; box-shadow: inset 1px 1px 0 #5c9bff; }
.task.cur { background: #1c4fb8; box-shadow: inset 1px 1px 1px #123a8e; gap: 5px; padding-left: 11px; }
.task svg { width: 17px; height: 17px; }
.kb { width: 18px; height: 16px; margin-left: 104px; }
.bar { width: 1px; height: 12px; margin: 0 14px 0 7px; background: #0b2a80; }
.tray { flex: 1; height: 32px; display: flex; align-items: center; gap: 1.500px; background: linear-gradient(#3fb2f5, #1290ea 15%, #1390ea 80%, #0f70c0); border-left: 1px solid #0d5ca8; }
.tray svg { width: 18px; height: 18px; flex: none; }
.tray .chev { width: 20px; height: 20px; margin-left: -10px; border-radius: 50%; background: #1e72dc; border: 1px solid #7bc0ff; display: flex; align-items: center; justify-content: center; flex: none; }
.tray .chev svg { width: 11px; height: 11px; }
.tray time { margin-left: 6px; }
.ime { position: absolute; left: 299px; top: 773px; width: 138px; height: 29px; padding: 3px; background: #c8c8c4; border: 1px solid; border-color: #fff #222 #222 #fff; box-shadow: inset -1px -1px 0 #777; display: flex; }
.ime span { border: 1px solid; border-color: #fff #333 #444 #fff; display: flex; align-items: center; justify-content: center; }
.ime svg { width: 100%; height: 18px; }
.c1 { width: 22px; }
.ime .c2 { width: 43px; margin: 0; padding: 0; font: 300 17.500px/20px "Noto Sans CJK SC", sans-serif; }
.ime .c3 { width: 22px; height: auto; margin: 0; padding: 0; }
.c4 { width: 21px; }
.c5 { width: 22px; }
</style>
